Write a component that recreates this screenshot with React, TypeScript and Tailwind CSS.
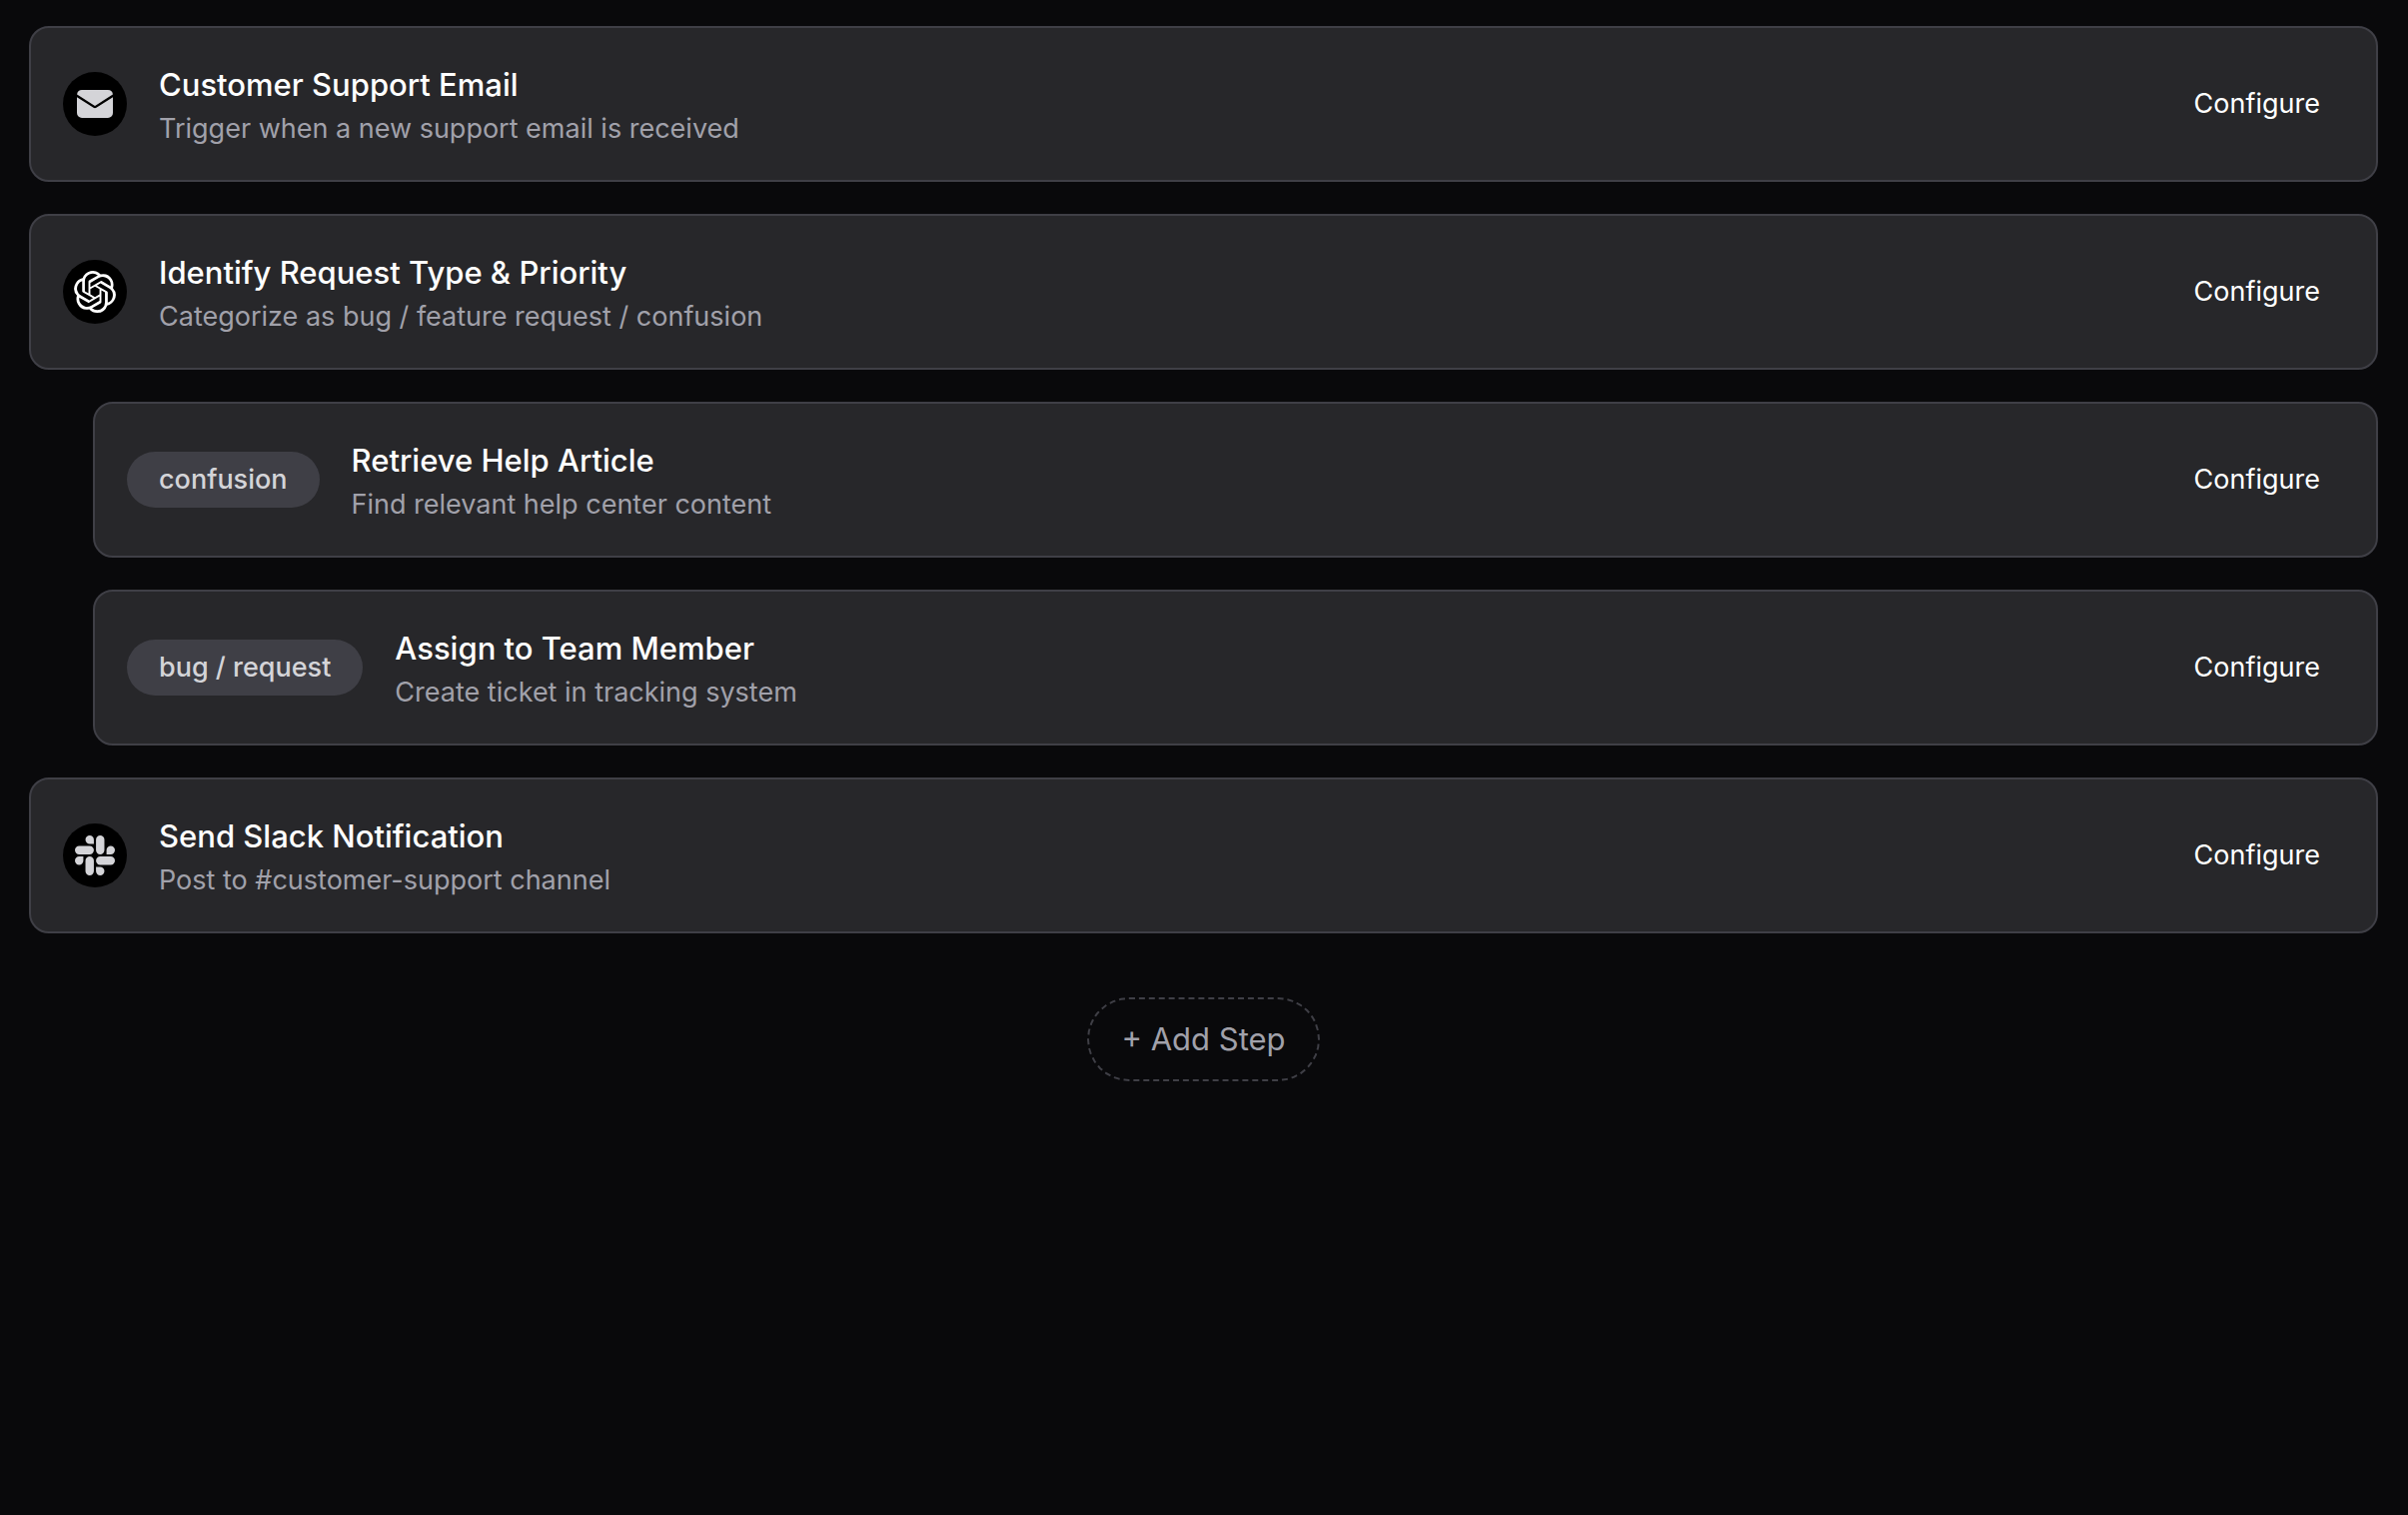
import type { ReactNode } from "react";
import { SiOpenai, SiSlack } from "react-icons/si";

interface Step {
  title: string;
  description: string;
  icon?: ReactNode;
  tag?: string;
}

const MailIcon = () => (
  <svg viewBox="0 0 36 28" className="w-9 h-7" fill="currentColor" aria-hidden="true">
    <path d="M5 0h26a5 5 0 0 1 4.9 4.6L18 16 .1 4.6A5 5 0 0 1 5 0Z" />
    <path d="M0 7.2 16.6 17.7a2.6 2.6 0 0 0 2.8 0L36 7.2V23a5 5 0 0 1-5 5H5a5 5 0 0 1-5-5V7.2Z" />
  </svg>
);

const steps: Step[] = [
  {
    title: "Customer Support Email",
    description: "Trigger when a new support email is received",
    icon: <MailIcon />,
  },
  {
    title: "Identify Request Type & Priority",
    description: "Categorize as bug / feature request / confusion",
    icon: <SiOpenai className="size-[42px] text-white" aria-hidden="true" />,
  },
  {
    title: "Retrieve Help Article",
    description: "Find relevant help center content",
    tag: "confusion",
  },
  {
    title: "Assign to Team Member",
    description: "Create ticket in tracking system",
    tag: "bug / request",
  },
  {
    title: "Send Slack Notification",
    description: "Post to #customer-support channel",
    icon: <SiSlack className="size-10" aria-hidden="true" />,
  },
];

function StepCard({ step }: { step: Step }) {
  return (
    <li
      className={`flex items-center gap-8 rounded-[20px] border-2 border-[#3f3f46] bg-[#27272a] p-8 ${
        step.tag ? "ml-16" : ""
      }`}
    >
      {step.icon && (
        <div className="size-16 shrink-0 flex items-center justify-center rounded-full bg-black text-[#d4d4d8]">
          {step.icon}
        </div>
      )}
      {step.tag && (
        <span className="shrink-0 rounded-full bg-[#3f3f46] px-8 py-2 text-[27px] leading-10 font-medium text-[#d4d4d8]">
          {step.tag}
        </span>
      )}
      <div className="flex-1 min-w-0">
        <h3 className="text-[31px] leading-[50px] font-medium text-white">{step.title}</h3>
        <p className="text-[27px] leading-[38px] text-[#a1a1aa]">{step.description}</p>
      </div>
      <button type="button" className="shrink-0 px-6 py-2 text-[27px] leading-10 text-white">
        Configure
      </button>
    </li>
  );
}

export default function App() {
  return (
    <main className="min-h-screen bg-[#09090b] pl-[29px] pr-[30px] pt-[26px] pb-8 font-['Inter',sans-serif]">
      <ul className="flex flex-col gap-8">
        {steps.map((step) => (
          <StepCard key={step.title} step={step} />
        ))}
      </ul>
      <div className="mt-16 flex justify-center">
        <button
          type="button"
          className="rounded-full border-2 border-dashed border-[#3f3f46] px-8 py-4 text-[31px] leading-12 text-[#a1a1aa]"
        >
          + Add Step
        </button>
      </div>
    </main>
  );
}
